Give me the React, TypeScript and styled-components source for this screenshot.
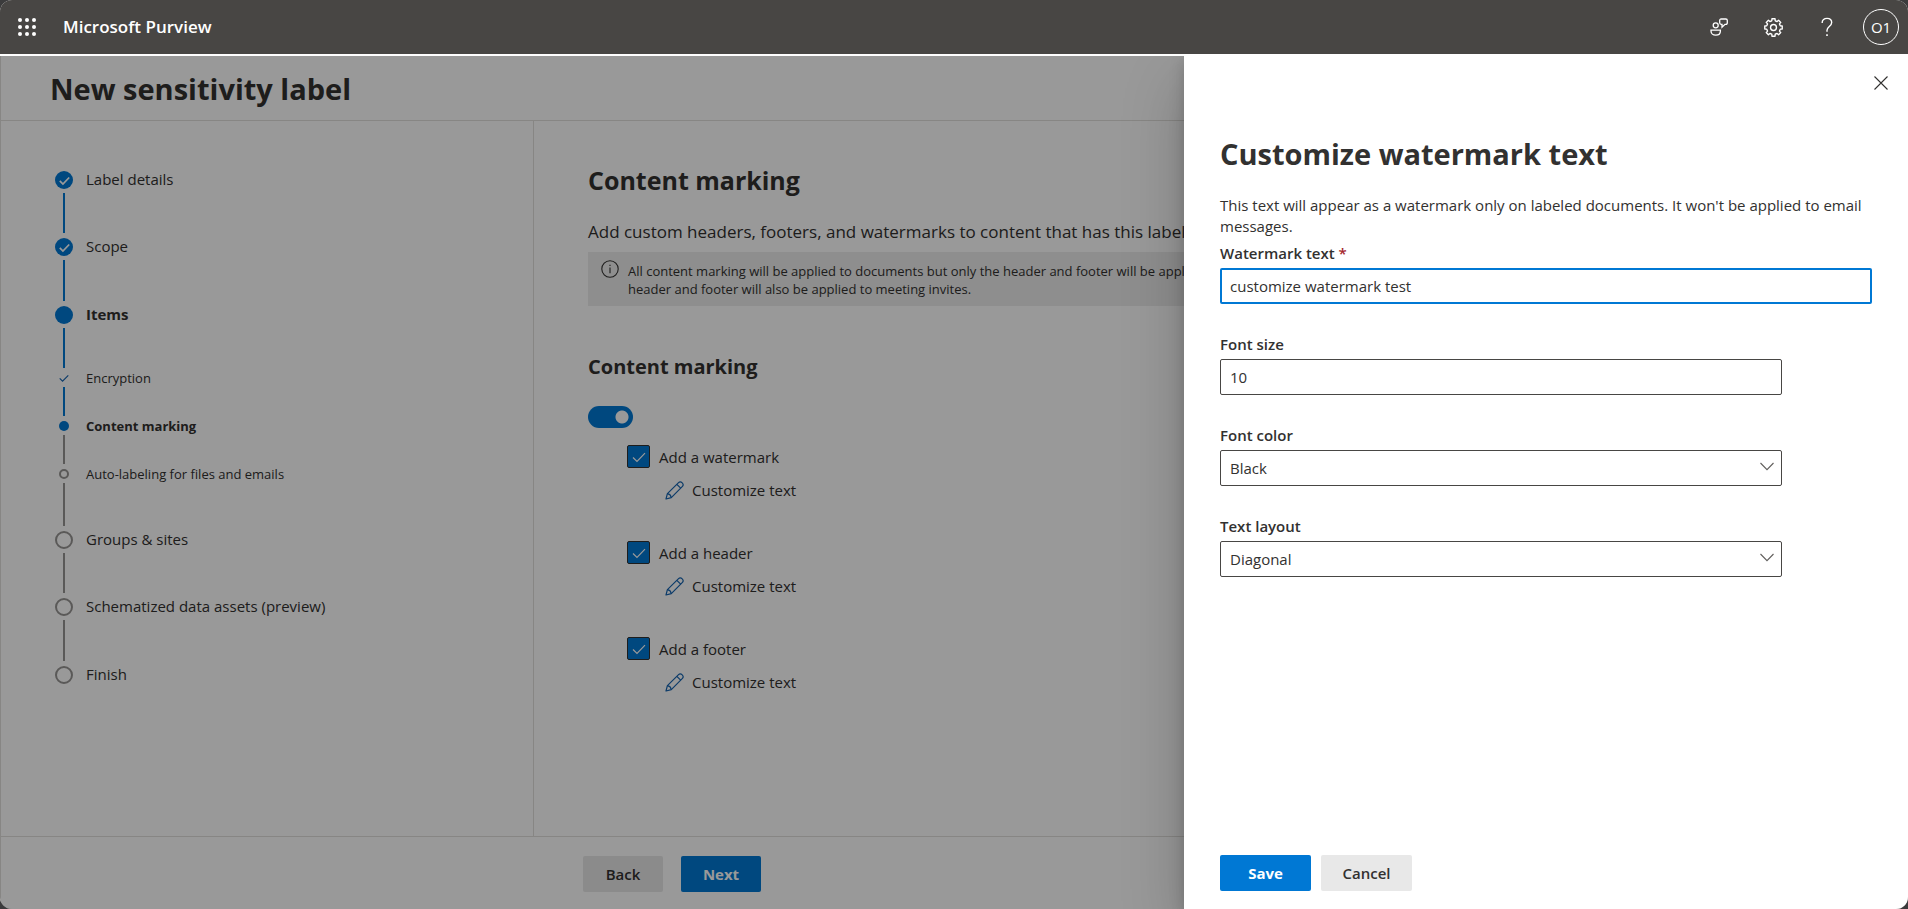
import React from "react";
import styled, { createGlobalStyle } from "styled-components";

const BLUE = "#0078d4";
const INK = "#323130";

const GlobalStyle = createGlobalStyle`
  * { box-sizing: border-box; }
  html { background: #3b3b3c; }
  body {
    margin: 0;
    color: ${INK};
    font-family: "Open Sans", "Noto Sans", sans-serif;
    font-size: 15px;
    line-height: 20px;
  }
  h1, h2, h3, p, ol, ul { margin: 0; padding: 0; }
  button, input, select { font: inherit; color: inherit; }
`;

const Shell = styled.div`
  display: flex;
  flex-direction: column;
  min-height: 100vh;
  overflow: hidden;
  border-radius: 12px;
  background: #fff;
`;

const TopBar = styled.header`
  display: flex;
  align-items: center;
  height: 54px;
  background: #484644;
  color: #fff;
`;

const BarButton = styled.button`
  display: grid;
  place-items: center;
  width: 54px;
  height: 54px;
  padding: 0;
  border: 0;
  background: transparent;
  color: #fff;
`;

const Brand = styled.span`
  flex: 1;
  padding-left: 9px;
  font-size: 17px;
  font-weight: 600;
`;

const Avatar = styled.span`
  display: grid;
  place-items: center;
  width: 36px;
  height: 36px;
  border: 1px solid #fff;
  border-radius: 50%;
  font-size: 15px;
`;

const Workspace = styled.div`
  position: relative;
  display: flex;
  flex: 1;
  flex-direction: column;
  margin-top: 2px;
  border-left: 1px solid #e1dfdd;
`;

const TitleBar = styled.div`
  display: flex;
  align-items: center;
  height: 65px;
  padding: 2px 0 0 49px;
  border-bottom: 1px solid #e1dfdd;
`;

const PageTitle = styled.h1`
  font-size: 29px;
  font-weight: 700;
  line-height: 40px;
`;

const Columns = styled.div`
  display: grid;
  flex: 1;
  grid-template-columns: 533px 1fr;
`;

const StepNav = styled.nav`
  padding: 50px 0 0 54px;
  border-right: 1px solid #e1dfdd;
`;

const StepList = styled.ol`
  list-style: none;
`;

type State = "done" | "current" | "todo";

const Step = styled.li<{ $sub?: boolean; $height: number }>`
  display: grid;
  grid-template-columns: 18px 1fr;
  grid-template-rows: ${(p) => (p.$sub ? 10 : 18)}px 1fr;
  column-gap: 13px;
  justify-items: center;
  height: ${(p) => p.$height}px;
`;

const Marker = styled.span<{ $sub?: boolean; $state: State }>`
  display: grid;
  place-items: center;
  width: ${(p) => (p.$sub ? 10 : 18)}px;
  height: ${(p) => (p.$sub ? 10 : 18)}px;
  border: ${(p) => (p.$state === "todo" ? "2px solid #979593" : "0")};
  border-radius: 50%;
  background: ${(p) => (p.$state === "todo" || (p.$sub && p.$state === "done") ? "transparent" : BLUE)};
  color: ${(p) => (p.$sub ? "#1664b0" : "#fff")};
`;

const StepLabel = styled.span<{ $sub?: boolean; $bold: boolean }>`
  justify-self: start;
  font-size: ${(p) => (p.$sub ? 13 : 15)}px;
  font-weight: ${(p) => (p.$bold ? 700 : 400)};
  line-height: ${(p) => (p.$sub ? 10 : 16)}px;
`;

const Connector = styled.span<{ $active: boolean }>`
  width: 2px;
  margin: 4px 0 5px;
  background: ${(p) => (p.$active ? BLUE : "#979593")};
`;

const Content = styled.main`
  padding: 39px 32px 32px 54px;
`;

const ContentTitle = styled.h2`
  font-size: 25px;
  font-weight: 700;
  line-height: 40px;
`;

const Lead = styled.p`
  margin: 21px 0 9px;
  font-size: 17px;
  line-height: 22px;
`;

const Notice = styled.div`
  display: flex;
  gap: 9px;
  min-height: 54px;
  padding: 8px 13px;
  background: #ededed;
  font-size: 13px;
  line-height: 18px;

  p { padding-top: 2px; }
`;

const SectionTitle = styled.h3`
  margin: 47px 0 25px;
  font-size: 20px;
  font-weight: 700;
  line-height: 28px;
`;

const Switch = styled.input`
  appearance: none;
  display: block;
  width: 45px;
  height: 22px;
  margin: 0 0 17px;
  border-radius: 11px;
  background: radial-gradient(circle at 34px 11px, #fff 6px, ${BLUE} 7px);
`;

const OptionList = styled.ul`
  display: grid;
  gap: 37px;
  padding-left: 39px;
  list-style: none;
`;

const Option = styled.li`
  display: grid;
  gap: 8px;
`;

const CheckLabel = styled.label`
  display: grid;
  grid-template-columns: 23px auto;
  justify-content: start;
  align-items: center;
  column-gap: 9px;
`;

const CheckBox = styled.input`
  grid-area: 1 / 1;
  appearance: none;
  width: 23px;
  height: 23px;
  margin: 0;
  border: 1px solid ${INK};
  border-radius: 2px;
  background: ${BLUE};
`;

const CheckMark = styled.span`
  display: grid;
  grid-area: 1 / 1;
  place-items: center;
  color: #fff;
  pointer-events: none;
`;

const LinkButton = styled.button`
  display: flex;
  align-items: center;
  gap: 8px;
  height: 28px;
  margin-left: 38px;
  padding: 0;
  border: 0;
  background: transparent;

  svg { color: #1664b0; }
`;

const Footer = styled.footer`
  display: flex;
  gap: 18px;
  height: 73px;
  padding: 19px 0 0 582px;
  border-top: 1px solid #e1dfdd;
`;

const Button = styled.button<{ $primary?: boolean; $wide?: boolean }>`
  width: ${(p) => (p.$wide ? 91 : 80)}px;
  height: 36px;
  padding: 0;
  border: 0;
  border-radius: 2px;
  background: ${(p) => (p.$primary ? BLUE : "#e8e8e8")};
  color: ${(p) => (p.$primary ? "#fff" : INK)};
  font-weight: ${(p) => (p.$primary ? 700 : 600)};
`;

const Scrim = styled.div`
  position: absolute;
  z-index: 2;
  inset: 0 0 0 -1px;
  display: flex;
  justify-content: flex-end;
  overflow: hidden;
  background: rgba(0, 0, 0, 0.4);
`;

const Panel = styled.section`
  display: flex;
  flex-direction: column;
  width: 724px;
  max-width: 100%;
  padding: 0 36px 18px;
  background: #fff;
  box-shadow: 0 26px 58px rgba(0, 0, 0, 0.22), 0 5px 14px rgba(0, 0, 0, 0.18);
`;

const CloseButton = styled.button`
  display: grid;
  place-items: center;
  align-self: flex-end;
  width: 54px;
  height: 54px;
  margin: 0 -36px 24px 0;
  padding: 0;
  border: 0;
  background: transparent;
`;

const PanelTitle = styled.h2`
  font-size: 29px;
  font-weight: 700;
  line-height: 40px;
`;

const Hint = styled.p`
  margin: 21px 0 5px;
  line-height: 21px;
`;

const Form = styled.form`
  display: flex;
  flex: 1;
  flex-direction: column;
  gap: 29px;
`;

const Field = styled.div<{ $narrow?: boolean }>`
  display: grid;
  gap: 4px;
  width: ${(p) => (p.$narrow ? "562px" : "auto")};
  max-width: 100%;
`;

const FieldLabel = styled.label`
  font-weight: 600;
  line-height: 22px;
`;

const Star = styled.span`
  color: #a4262c;
`;

const TextBox = styled.input<{ $focused?: boolean }>`
  width: 100%;
  height: 36px;
  padding: 0 ${(p) => (p.$focused ? 8 : 9)}px;
  border: ${(p) => (p.$focused ? `2px solid ${BLUE}` : "1px solid #484644")};
  border-radius: 2px;
  outline: 0;
  background: #fff;
`;

const SelectWrap = styled.div`
  position: relative;

  svg {
    position: absolute;
    top: 10px;
    right: 8px;
    color: #605e5c;
    pointer-events: none;
  }
`;

const SelectBox = styled.select`
  appearance: none;
  width: 100%;
  height: 36px;
  padding: 0 9px;
  border: 1px solid #484644;
  border-radius: 2px;
  background: #fff;
`;

const Actions = styled.div`
  display: flex;
  gap: 10px;
  margin-top: auto;
`;

const WaffleIcon = () => (
  <svg width="18" height="18" viewBox="0 0 18 18" fill="currentColor" aria-hidden="true">
    {[2, 9, 16].map((y) => [2, 9, 16].map((x) => <circle key={`${x}-${y}`} cx={x} cy={y} r="2" />))}
  </svg>
);

const FeedbackIcon = () => (
  <svg width="18" height="18" viewBox="0 0 18 18" fill="none" stroke="currentColor" strokeWidth="1.3" aria-hidden="true">
    <circle cx="5.7" cy="7.3" r="2.5" />
    <path d="M1 12.2h9.4v.8c0 2.6-2 4.2-4.700 4.200S1 15.600 1 13z" />
    <path d="M11.200 1h4.600q1.500 0 1.500 1.500v2.300q0 1.500-1.500 1.500h-.8l-3 3V6.300h-.8q-1.500 0-1.500-1.500V2.500q0-1.500 1.500-1.500z" />
  </svg>
);

const gearOutline = (() => {
  const teeth = 8;
  const points: string[] = [];
  for (let i = 0; i < teeth; i++) {
    const middle = (i * 360) / teeth;
    for (const [offset, radius] of [[-14, 6.6], [-10, 8.4], [10, 8.4], [14, 6.6]]) {
      const angle = ((middle + offset) * Math.PI) / 180;
      points.push(`${(9 + radius * Math.sin(angle)).toFixed(2)},${(9 - radius * Math.cos(angle)).toFixed(2)}`);
    }
  }
  return points.join(" ");
})();

const GearIcon = () => (
  <svg width="19" height="19" viewBox="0 0 18 18" fill="none" stroke="currentColor" strokeWidth="1.3" strokeLinejoin="round" aria-hidden="true">
    <polygon points={gearOutline} />
    <circle cx="9" cy="9" r="2.8" />
  </svg>
);

const HelpIcon = () => (
  <svg width="12" height="20" viewBox="0 0 12 20" fill="none" stroke="currentColor" strokeWidth="1.4" aria-hidden="true">
    <path d="M1.200 6V5.600C1.200 3 3.200 1.400 6 1.400s4.700 1.700 4.700 4.200c0 3.800-4.700 4-4.700 7.600v1.600" />
    <path d="M5.200 18.100h1.600" strokeWidth="1.6" />
  </svg>
);

const CloseIcon = () => (
  <svg width="14" height="14" viewBox="0 0 14 14" fill="none" stroke="currentColor" strokeWidth="1.1" aria-hidden="true">
    <path d="M.5.5l13 13M13.500.5l-13 13" />
  </svg>
);

const Check = ({ size, weight }: { size: number; weight: number }) => (
  <svg width={size} height={size} viewBox="0 0 14 14" fill="none" stroke="currentColor" strokeWidth={weight} aria-hidden="true">
    <path d="M1 7.500l4 4L13 3.200" />
  </svg>
);

const PencilIcon = () => (
  <svg width="19" height="19" viewBox="0 0 19 19" fill="none" stroke="currentColor" strokeWidth="1.2" strokeLinejoin="round" aria-hidden="true">
    <path d="M1 18l1.400-5.300L13.300 1.800a2.700 2.700 0 0 1 3.900 3.900L6.300 16.600z" />
    <path d="M2.400 12.700q3.200.5 3.900 3.900M11.800 3.300l3.900 3.900" />
  </svg>
);

const InfoIcon = () => (
  <svg width="18" height="18" viewBox="0 0 18 18" fill="none" stroke="currentColor" strokeWidth="1.1" aria-hidden="true">
    <circle cx="9" cy="9" r="8.2" />
    <path d="M9 7.400v5.800M9 4.800v1.300" />
  </svg>
);

const ChevronIcon = () => (
  <svg width="14" height="14" viewBox="0 0 14 14" fill="none" stroke="currentColor" strokeWidth="1.1" aria-hidden="true">
    <path d="M.5 3l6.500 6.700L13.500 3" />
  </svg>
);

interface StepData {
  label: string;
  state: State;
  sub?: boolean;
  height: number;
  last?: boolean;
}

const steps: StepData[] = [
  { label: "Label details", state: "done", height: 67 },
  { label: "Scope", state: "done", height: 68 },
  { label: "Items", state: "current", height: 67 },
  { label: "Encryption", state: "done", sub: true, height: 48 },
  { label: "Content marking", state: "current", sub: true, height: 48 },
  { label: "Auto-labeling for files and emails", state: "todo", sub: true, height: 62 },
  { label: "Groups & sites", state: "todo", height: 67 },
  { label: "Schematized data assets (preview)", state: "todo", height: 68 },
  { label: "Finish", state: "todo", height: 18, last: true },
];

const options = ["Add a watermark", "Add a header", "Add a footer"];

export default function App() {
  return (
    <>
      <GlobalStyle />
      <Shell>
        <TopBar>
          <BarButton aria-label="App launcher"><WaffleIcon /></BarButton>
          <Brand>Microsoft Purview</Brand>
          <BarButton aria-label="Feedback"><FeedbackIcon /></BarButton>
          <BarButton aria-label="Settings"><GearIcon /></BarButton>
          <BarButton aria-label="Help"><HelpIcon /></BarButton>
          <BarButton aria-label="Account"><Avatar>O1</Avatar></BarButton>
        </TopBar>
        <Workspace>
          <TitleBar>
            <PageTitle>New sensitivity label</PageTitle>
          </TitleBar>
          <Columns>
            <StepNav aria-label="Steps">
              <StepList>
                {steps.map((s) => (
                  <Step key={s.label} $sub={s.sub} $height={s.height}>
                    <Marker $sub={s.sub} $state={s.state}>
                      {s.state === "done" && <Check size={s.sub ? 10 : 11} weight={s.sub ? 1.6 : 2.2} />}
                    </Marker>
                    <StepLabel $sub={s.sub} $bold={s.state === "current"}>{s.label}</StepLabel>
                    {!s.last && <Connector $active={s.state === "done" || (s.state === "current" && !s.sub)} />}
                  </Step>
                ))}
              </StepList>
            </StepNav>
            <Content>
              <ContentTitle>Content marking</ContentTitle>
              <Lead>Add custom headers, footers, and watermarks to content that has this label applied.</Lead>
              <Notice>
                <InfoIcon />
                <p>
                  All content marking will be applied to documents but only the header and footer will be applied to email messages. The
                  <br />
                  header and footer will also be applied to meeting invites.
                </p>
              </Notice>
              <SectionTitle id="marking">Content marking</SectionTitle>
              <Switch type="checkbox" role="switch" defaultChecked aria-labelledby="marking" />
              <OptionList>
                {options.map((name) => (
                  <Option key={name}>
                    <CheckLabel>
                      <CheckBox type="checkbox" defaultChecked />
                      <CheckMark><Check size={14} weight={1.2} /></CheckMark>
                      {name}
                    </CheckLabel>
                    <LinkButton type="button"><PencilIcon />Customize text</LinkButton>
                  </Option>
                ))}
              </OptionList>
            </Content>
          </Columns>
          <Footer>
            <Button type="button">Back</Button>
            <Button type="button" $primary>Next</Button>
          </Footer>
          <Scrim>
            <Panel role="dialog" aria-labelledby="panel-title">
              <CloseButton type="button" aria-label="Close"><CloseIcon /></CloseButton>
              <PanelTitle id="panel-title">Customize watermark text</PanelTitle>
              <Hint>This text will appear as a watermark only on labeled documents. It won't be applied to email messages.</Hint>
              <Form>
                <Field>
                  <FieldLabel htmlFor="text">Watermark text <Star>*</Star></FieldLabel>
                  <TextBox id="text" $focused defaultValue="customize watermark test" />
                </Field>
                <Field $narrow>
                  <FieldLabel htmlFor="size">Font size</FieldLabel>
                  <TextBox id="size" defaultValue="10" />
                </Field>
                <Field $narrow>
                  <FieldLabel htmlFor="color">Font color</FieldLabel>
                  <SelectWrap>
                    <SelectBox id="color"><option>Black</option></SelectBox>
                    <ChevronIcon />
                  </SelectWrap>
                </Field>
                <Field $narrow>
                  <FieldLabel htmlFor="layout">Text layout</FieldLabel>
                  <SelectWrap>
                    <SelectBox id="layout"><option>Diagonal</option></SelectBox>
                    <ChevronIcon />
                  </SelectWrap>
                </Field>
                <Actions>
                  <Button type="button" $primary $wide>Save</Button>
                  <Button type="button" $wide>Cancel</Button>
                </Actions>
              </Form>
            </Panel>
          </Scrim>
        </Workspace>
      </Shell>
    </>
  );
}
